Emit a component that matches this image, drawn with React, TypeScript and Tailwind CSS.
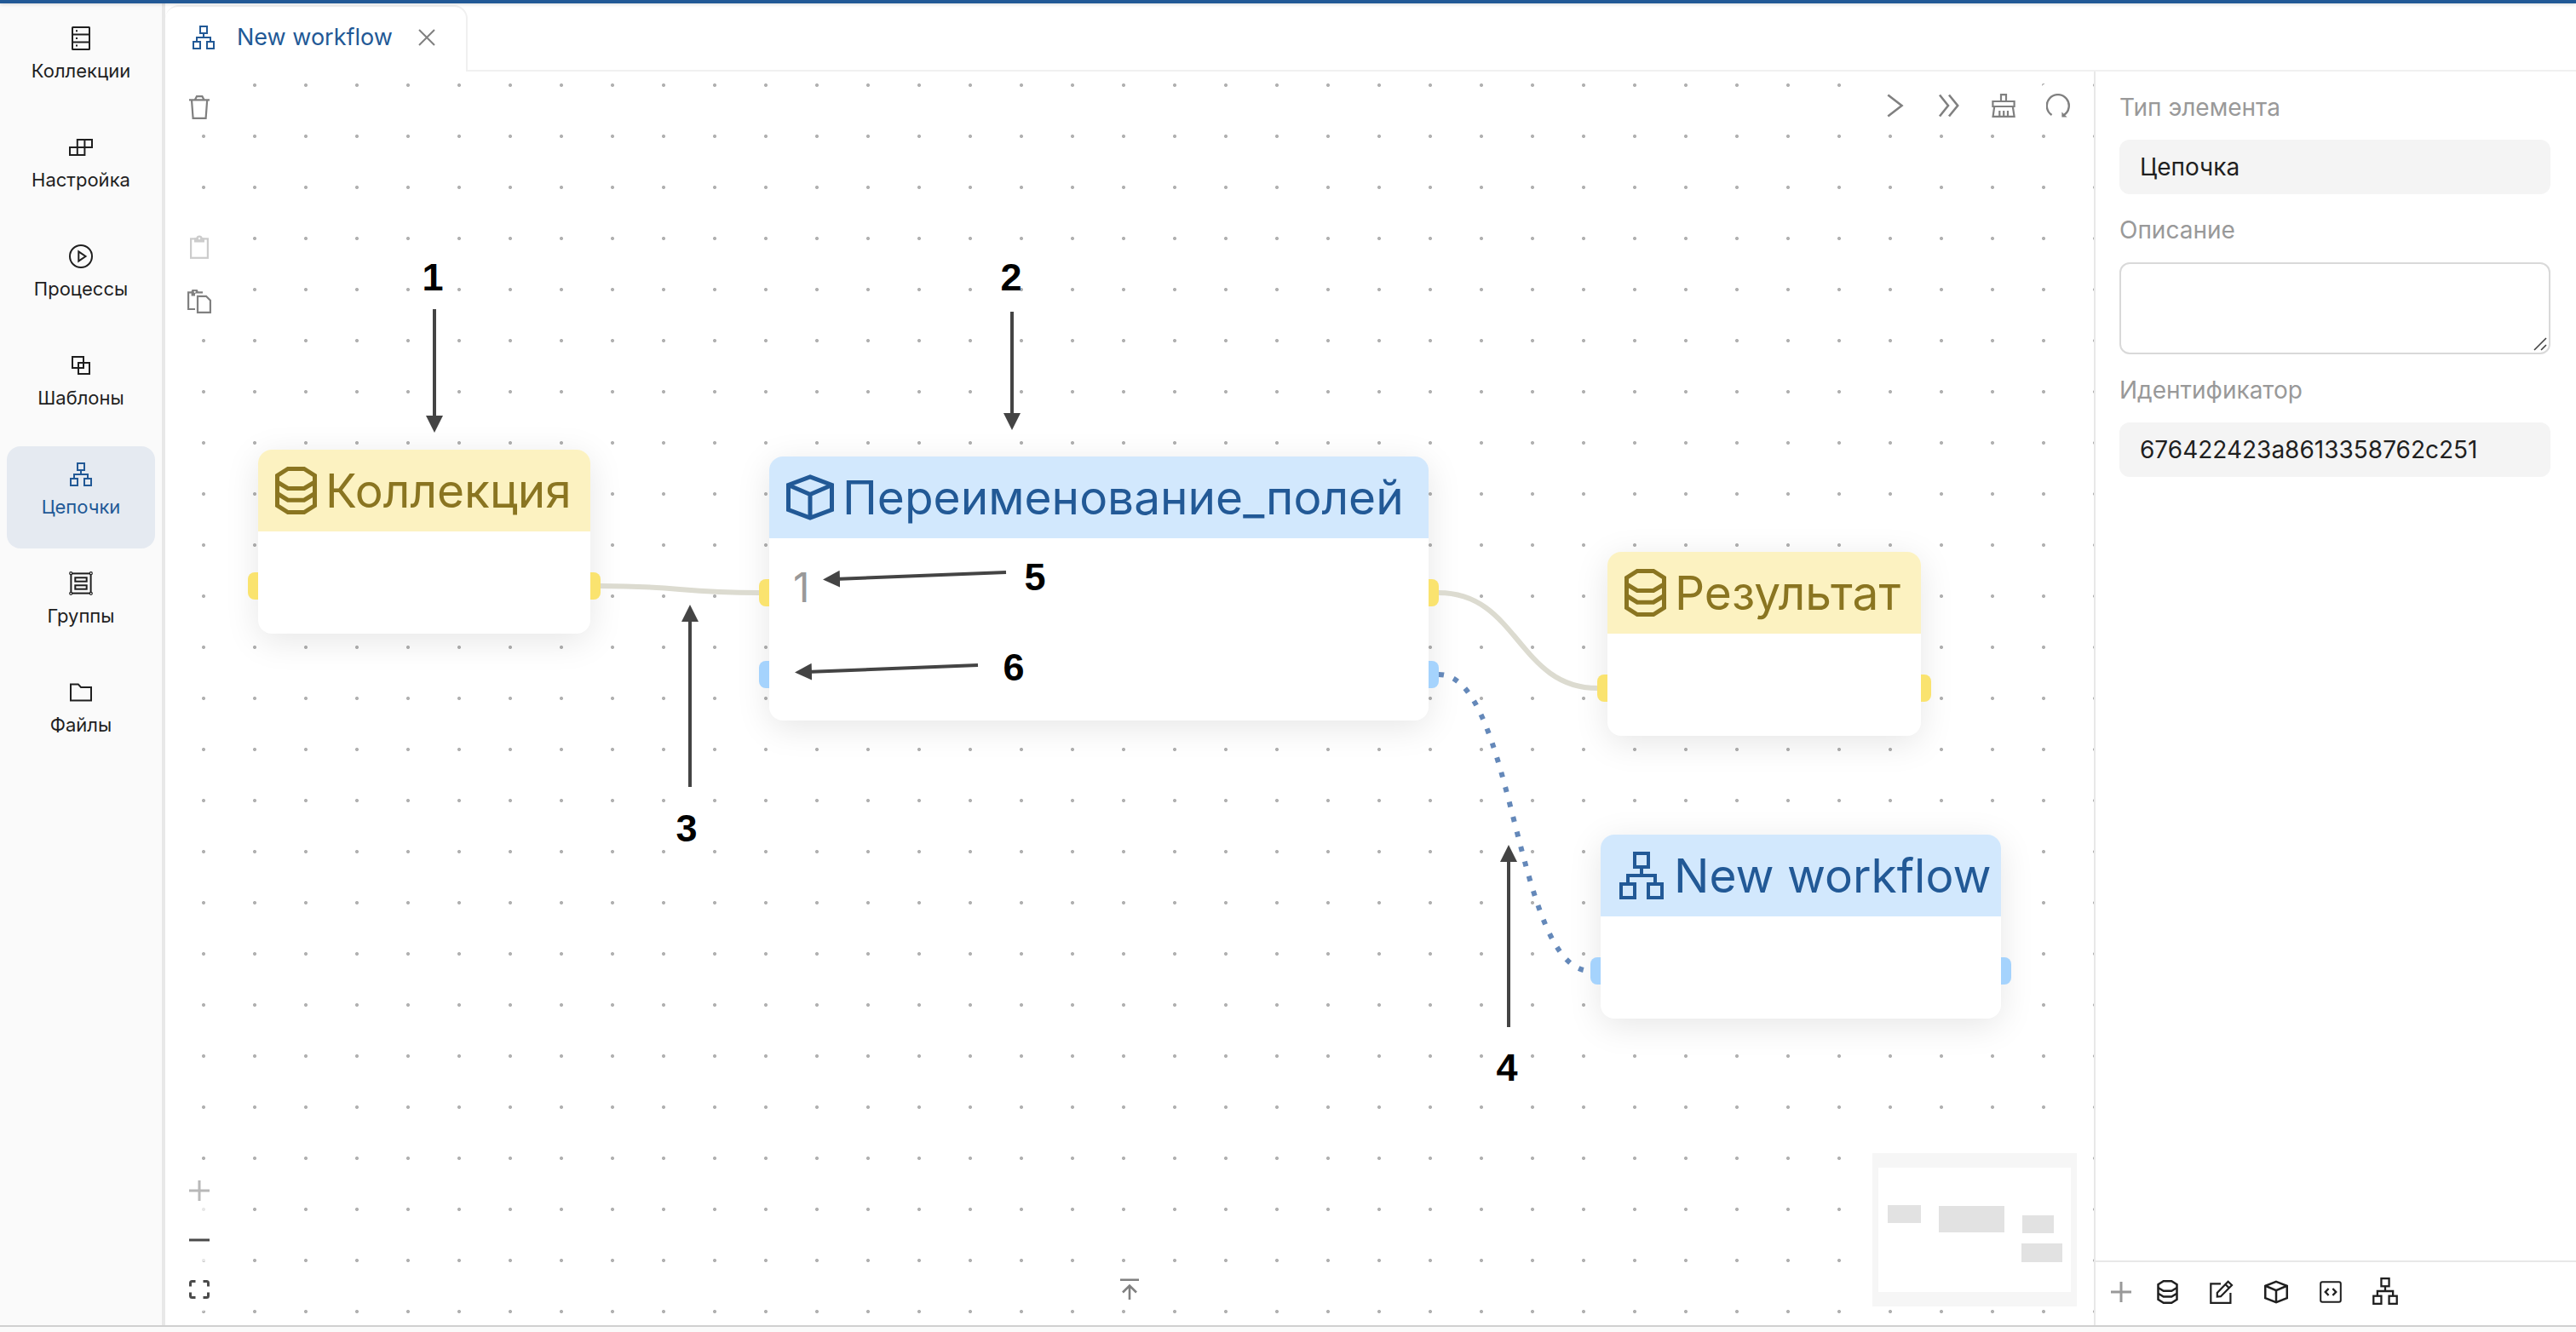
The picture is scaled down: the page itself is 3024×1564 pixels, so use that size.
import type { ReactNode } from "react";

type IconProps = { className?: string };

function NetworkIcon({ className }: IconProps) {
  return (
    <svg viewBox="0 0 26 28" className={className} fill="none" stroke="currentColor" strokeWidth="2" aria-hidden="true">
      <rect x="9" y="1" width="8" height="8" />
      <rect x="1" y="19" width="8" height="8" />
      <rect x="17" y="19" width="8" height="8" />
      <path d="M13 9v5M5 19v-5h16v5" />
    </svg>
  );
}

function DatabaseIcon({ className }: IconProps) {
  return (
    <svg viewBox="0 0 49 56" className={className} fill="none" stroke="currentColor" strokeWidth="5" aria-hidden="true">
      <path d="M15 2.5H34L46.5 10.3V45.7L34 53.5H15L2.5 45.7V10.3Z" />
      <path d="M2.5 18L15 25.5H34L46.5 18M2.5 31.5L15 39.2H34L46.5 31.5" />
    </svg>
  );
}

function CubeIcon({ className }: IconProps) {
  return (
    <svg viewBox="0 0 56 54" className={className} fill="none" stroke="currentColor" strokeWidth="5" aria-hidden="true">
      <path d="M28 2.8L53.5 12.5V41.5L28 51.2L2.5 41.5V12.5Z" />
      <path d="M2.5 12.5L28 23.5L53.5 12.5M28 23.5V51" />
    </svg>
  );
}

function CollectionsIcon() {
  return (
    <svg viewBox="0 0 22 28" className="h-7 w-[22px]" fill="none" stroke="currentColor" strokeWidth="2" aria-hidden="true">
      <rect x="1" y="1" width="20" height="26" rx="0.5" />
      <path d="M1 9.6h20M1 18.4h20" />
      <path d="M5 5.3h2M5 14h2M5 22.5h2" />
    </svg>
  );
}

function SettingsIcon() {
  return (
    <svg viewBox="0 0 28 20" className="h-5 w-7" fill="none" stroke="currentColor" strokeWidth="2" aria-hidden="true">
      <path d="M9.8 1H27V10H9.8ZM1 10H18.4V19H1ZM18.4 1V10M9.8 10V19" />
    </svg>
  );
}

function ProcessIcon() {
  return (
    <svg viewBox="0 0 28 28" className="size-7" fill="none" stroke="currentColor" strokeWidth="2" aria-hidden="true">
      <circle cx="14" cy="14" r="13" />
      <path d="M11.3 8.4L19.5 14L11.3 19.6Z" />
    </svg>
  );
}

function TemplatesIcon() {
  return (
    <svg viewBox="0 0 22 22" className="size-[22px]" fill="none" stroke="currentColor" strokeWidth="2" aria-hidden="true">
      <rect x="1" y="1" width="13" height="13" />
      <rect x="8" y="8" width="13" height="13" />
    </svg>
  );
}

function GroupsIcon() {
  return (
    <svg viewBox="0 0 28 28" className="size-7" fill="none" stroke="currentColor" strokeWidth="2" aria-hidden="true">
      <rect x="2.4" y="2.4" width="23.2" height="23.2" />
      <rect x="7.3" y="7.3" width="13.4" height="4.4" />
      <rect x="7.3" y="16.3" width="13.4" height="4.4" />
      <g fill="#fafafa" strokeWidth="1.2">
        <circle cx="2.2" cy="2.2" r="1.5" />
        <circle cx="25.8" cy="2.2" r="1.5" />
        <circle cx="2.2" cy="25.8" r="1.5" />
        <circle cx="25.8" cy="25.8" r="1.5" />
      </g>
    </svg>
  );
}

function FolderIcon() {
  return (
    <svg viewBox="0 0 26 22" className="h-[22px] w-[26px]" fill="none" stroke="currentColor" strokeWidth="2" aria-hidden="true">
      <path d="M1 1.4H9.8L13 5H25V20.6H1Z" />
    </svg>
  );
}

function TrashIcon() {
  return (
    <svg viewBox="0 0 24 28" className="h-7 w-6" fill="none" stroke="currentColor" strokeWidth="2.2" aria-hidden="true">
      <path d="M0 5.3H24M6.8 5.3L9 1.2H15.4L17.6 5.3M3 5.3L4.6 26.8H19.6L21.2 5.3" />
    </svg>
  );
}

function ClipboardIcon() {
  return (
    <svg viewBox="0 0 22 28" className="h-7 w-[22px]" fill="none" stroke="currentColor" strokeWidth="2.2" aria-hidden="true">
      <rect x="1.1" y="4.4" width="19.8" height="22.4" />
      <path d="M5 3.4H7.2A3.9 3.9 0 0 1 14.8 3.4H17V8.6H5Z" fill="currentColor" stroke="none" />
      <circle cx="11" cy="4" r="1.2" fill="#fff" stroke="none" />
    </svg>
  );
}

function PasteIcon() {
  return (
    <svg viewBox="0 0 28 28" className="size-7" fill="none" stroke="currentColor" strokeWidth="2.2" aria-hidden="true">
      <path d="M9 23H1.1V3.4H18" />
      <path d="M4.6 3A4 4 0 0 1 12.6 3L9 4.4V7.4H4.6Z" fill="currentColor" stroke="none" />
      <circle cx="8.7" cy="2.8" r="1.1" fill="#fff" stroke="none" />
      <path d="M12 7.8H22L26.9 12.6V26.8H12Z" />
    </svg>
  );
}

function ChevronIcon() {
  return (
    <svg viewBox="0 0 28 28" className="size-7" fill="none" stroke="currentColor" strokeWidth="2.6" aria-hidden="true">
      <path d="M6.3 1.5L22.5 14L6.3 26.5" />
    </svg>
  );
}

function DoubleChevronIcon() {
  return (
    <svg viewBox="0 0 28 28" className="size-7" fill="none" stroke="currentColor" strokeWidth="2.6" aria-hidden="true">
      <path d="M3 1.5L13 14L3 26.5M14 1.5L24.2 14L14 26.5" />
    </svg>
  );
}

function BrushIcon() {
  return (
    <svg viewBox="0 0 28 28" className="size-7" fill="none" stroke="currentColor" strokeWidth="2.2" aria-hidden="true">
      <path d="M11 9V1.1H17V9M1.4 9H26.6V15H1.4ZM3.2 15L1.6 26.9H26.6L24.8 15M9.3 20V27M14.2 20V27M19 20V27" />
    </svg>
  );
}

function ReloadIcon() {
  return (
    <svg viewBox="0 0 28 28" className="size-7" fill="none" stroke="currentColor" strokeWidth="2.4" aria-hidden="true">
      <path d="M6.6 25A13 13 0 1 1 20.6 25.2" />
      <path d="M18.4 21.5V27.6H24.6Z" fill="currentColor" stroke="none" />
    </svg>
  );
}

function EditIcon() {
  return (
    <svg viewBox="0 0 28 28" className="size-7" fill="none" stroke="currentColor" strokeWidth="2.2" aria-hidden="true">
      <path d="M13 4.4H1.3V26.8H24.4V15" />
      <path d="M8.8 19.6V15L21.6 1.8L26 6L13 19.2ZM18.4 5L22.8 9.4" />
    </svg>
  );
}

function CodeIcon() {
  return (
    <svg viewBox="0 0 26 26" className="size-[26px]" fill="none" stroke="currentColor" strokeWidth="2" aria-hidden="true">
      <rect x="1.2" y="1.2" width="23.6" height="23.6" rx="2" />
      <path d="M10.6 9L6.8 13L10.6 17M15.4 9L19.2 13L15.4 17" strokeWidth="2.4" />
    </svg>
  );
}

function PlusIcon({ className }: IconProps) {
  return (
    <svg viewBox="0 0 24 24" className={className} fill="none" stroke="currentColor" strokeWidth="3" aria-hidden="true">
      <path d="M12 0V24M0 12H24" />
    </svg>
  );
}

const menu: { label: string; icon: ReactNode; active?: boolean }[] = [
  { label: "Коллекции", icon: <CollectionsIcon /> },
  { label: "Настройка", icon: <SettingsIcon /> },
  { label: "Процессы", icon: <ProcessIcon /> },
  { label: "Шаблоны", icon: <TemplatesIcon /> },
  { label: "Цепочки", icon: <NetworkIcon className="h-7 w-[26px]" />, active: true },
  { label: "Группы", icon: <GroupsIcon /> },
  { label: "Файлы", icon: <FolderIcon /> },
];

function Sidebar() {
  return (
    <nav className="flex w-[194px] shrink-0 flex-col gap-2 border-r-4 border-[#e8e8e8] bg-[#fafafa] px-2 pt-2">
      {menu.map((item) => (
        <button
          key={item.label}
          type="button"
          className={
            item.active
              ? "flex h-[120px] flex-col items-center gap-2 rounded-2xl bg-[#e5eaf1] pt-[19px] text-[#225996]"
              : "flex h-[120px] flex-col items-center gap-2 rounded-2xl pt-[19px] text-[#1f1f1f]"
          }
        >
          <span className="flex h-7 items-center">{item.icon}</span>
          <span className="text-[22px] leading-8">{item.label}</span>
        </button>
      ))}
    </nav>
  );
}

function TabBar() {
  return (
    <div className="flex h-20 shrink-0 pt-0.5">
      <div className="flex w-[355px] shrink-0 items-center rounded-t-2xl border-t-2 border-r-2 border-[#f0f0f0] pb-1 pl-8 text-[#225996]">
        <NetworkIcon className="h-7 w-[26px]" />
        <a href="#workflow" className="ml-[26px] text-[27px] leading-10 whitespace-nowrap">
          New workflow
        </a>
        <button type="button" aria-label="Закрыть" className="ml-[30px] text-[#808080]">
          <svg viewBox="0 0 20 20" className="size-5" fill="none" stroke="currentColor" strokeWidth="2" aria-hidden="true">
            <path d="M1 1L19 19M19 1L1 19" />
          </svg>
        </button>
      </div>
      <div className="flex-1 border-b-2 border-[#f0f0f0]" />
    </div>
  );
}

type FlowNode = {
  id: string;
  title: string;
  kind: "data" | "action" | "flow";
  x: number;
  y: number;
  width: number;
  height: number;
  badge?: string;
};

// Positions are measured from the canvas' top left corner.
const nodes: FlowNode[] = [
  { id: "source", title: "Коллекция", kind: "data", x: 109, y: 444, width: 390, height: 216 },
  { id: "rename", title: "Переименование_полей", kind: "action", x: 709, y: 452, width: 774, height: 310, badge: "1" },
  { id: "result", title: "Результат", kind: "data", x: 1693, y: 564, width: 368, height: 216 },
  { id: "workflow", title: "New workflow", kind: "flow", x: 1685, y: 896, width: 470, height: 216 },
];

function Ports({ tone, low }: { tone: "yellow" | "blue"; low?: boolean }) {
  const color = tone === "yellow" ? "bg-[#fae36f]" : "bg-[#a5d3fd]";
  const top = low ? "top-60" : "top-36";
  return (
    <>
      <span className={`absolute -left-3 h-8 w-3 rounded-l-lg ${top} ${color}`} />
      <span className={`absolute -right-3 h-8 w-3 rounded-r-lg ${top} ${color}`} />
    </>
  );
}

function NodeCard({ node }: { node: FlowNode }) {
  const isData = node.kind === "data";
  return (
    <article
      className="absolute rounded-2xl bg-white shadow-[0_8px_40px_rgba(0,0,0,0.1)]"
      style={{ left: node.x, top: node.y, width: node.width, height: node.height }}
    >
      {node.kind === "flow" ? <Ports tone="blue" /> : <Ports tone="yellow" />}
      {node.kind === "action" && <Ports tone="blue" low />}
      <header
        className={
          isData
            ? "flex h-24 items-center gap-2.5 rounded-t-2xl bg-[#fcf2c1] pl-5 text-[#8a7521]"
            : "flex h-24 items-center gap-2.5 rounded-t-2xl bg-[#d2e8fd] pl-5 text-[#225996]"
        }
      >
        {node.kind === "data" && <DatabaseIcon className="h-14 w-[49px] shrink-0" />}
        {node.kind === "action" && <CubeIcon className="h-[54px] w-14 shrink-0" />}
        {node.kind === "flow" && <NetworkIcon className="h-14 w-14 shrink-0" />}
        <h2 className="text-[55px] leading-[80px] whitespace-nowrap">{node.title}</h2>
      </header>
      {node.badge && <p className="px-7 pt-[34px] text-5xl leading-[48px] text-[#999999]">{node.badge}</p>}
    </article>
  );
}

const callouts = [
  { n: 1, x: 314, y: 242 },
  { n: 2, x: 993, y: 242 },
  { n: 3, x: 612, y: 889 },
  { n: 4, x: 1575, y: 1170 },
  { n: 5, x: 1021, y: 594 },
  { n: 6, x: 996, y: 700 },
];

const arrows = [
  "M316 279V410",
  "M994 282V407",
  "M616 840V640",
  "M1577 1122V922",
  "M987 588L786 596",
  "M954 697L753 705",
];

function Edges() {
  return (
    <svg className="absolute inset-0 size-full" fill="none" aria-hidden="true">
      <g strokeWidth="6">
        <path d="M511 604C604 604 604 612 697 612" stroke="#dcdbd0" />
        <path d="M1495 612C1588 612 1588 724 1681 724" stroke="#dcdbd0" />
        <path d="M1495 708C1584 708 1584 1056 1673 1056" stroke="#6488b9" strokeDasharray="6 12" />
      </g>
    </svg>
  );
}

function Callouts() {
  return (
    <div className="pointer-events-none absolute inset-0">
      <svg className="absolute inset-0 size-full" fill="none" aria-hidden="true">
        <defs>
          <marker id="tip" markerUnits="userSpaceOnUse" markerWidth="20" markerHeight="20" refX="6" refY="10" orient="auto">
            <path d="M0 0L20 10L0 20Z" fill="#444444" />
          </marker>
        </defs>
        {arrows.map((d) => (
          <path key={d} d={d} stroke="#444444" strokeWidth="4" markerEnd="url(#tip)" />
        ))}
      </svg>
      {callouts.map((c) => (
        <span
          key={c.n}
          className="absolute flex size-12 -translate-1/2 items-center justify-center font-['Liberation_Sans',Arial,sans-serif] text-[45px] leading-[48px] font-bold text-black"
          style={{ left: c.x, top: c.y }}
        >
          {c.n}
        </span>
      ))}
    </div>
  );
}

function ToolButton({ label, disabled, children }: { label: string; disabled?: boolean; children: ReactNode }) {
  return (
    <button
      type="button"
      aria-label={label}
      disabled={disabled}
      className="flex size-15 items-center justify-center rounded-full bg-white text-[#808080] disabled:text-[#cccccc]"
    >
      {children}
    </button>
  );
}

function ZoomButton({ label, disabled, children }: { label: string; disabled?: boolean; children: ReactNode }) {
  return (
    <button
      type="button"
      aria-label={label}
      disabled={disabled}
      className="flex size-13 items-center justify-center rounded-full bg-white/70 text-[#4a4a4a] disabled:text-[#b8b8b8]"
    >
      {children}
    </button>
  );
}

function Minimap() {
  return (
    <svg viewBox="0 0 240 180" className="absolute right-5 bottom-[22px] h-[180px] w-60" role="img" aria-label="Мини-карта">
      <rect width="240" height="180" fill="#f6f6f6" />
      <rect x="7" y="17" width="226" height="146" fill="#ffffff" />
      <g fill="#e2e2e2">
        <rect x="18" y="61" width="39" height="21" />
        <rect x="78" y="62" width="77" height="31" />
        <rect x="176" y="73" width="37" height="21" />
        <rect x="175" y="106" width="48" height="22" />
      </g>
    </svg>
  );
}

function Canvas() {
  return (
    <main className="relative min-w-0 flex-1 overflow-hidden bg-white bg-[radial-gradient(circle,#b1b1b1_1.6px,transparent_2.4px)] bg-[size:60px_60px] bg-[position:15px_-14px]">
      {nodes.map((node) => (
        <NodeCard key={node.id} node={node} />
      ))}
      <Edges />
      <Callouts />

      <div className="absolute top-3 left-2.5 flex flex-col">
        <ToolButton label="Удалить">
          <TrashIcon />
        </ToolButton>
        <div className="mt-26 flex flex-col gap-1">
          <ToolButton label="Вставить" disabled>
            <ClipboardIcon />
          </ToolButton>
          <ToolButton label="Копировать">
            <PasteIcon />
          </ToolButton>
        </div>
      </div>

      <div className="absolute top-2.5 right-3 flex gap-1">
        <ToolButton label="Шаг">
          <ChevronIcon />
        </ToolButton>
        <ToolButton label="Запустить всё">
          <DoubleChevronIcon />
        </ToolButton>
        <ToolButton label="Очистить">
          <BrushIcon />
        </ToolButton>
        <ToolButton label="Обновить">
          <ReloadIcon />
        </ToolButton>
      </div>

      <div className="absolute bottom-4 left-3.5 flex flex-col gap-1.5">
        <ZoomButton label="Увеличить" disabled>
          <PlusIcon className="size-6" />
        </ZoomButton>
        <ZoomButton label="Уменьшить">
          <svg viewBox="0 0 24 24" className="size-6" stroke="currentColor" strokeWidth="3" aria-hidden="true">
            <path d="M0 12H24" />
          </svg>
        </ZoomButton>
        <ZoomButton label="Показать всё">
          <svg viewBox="0 0 24 22" className="h-[22px] w-6" fill="none" stroke="currentColor" strokeWidth="3" aria-hidden="true">
            <path d="M1.5 7.5V3.5Q1.5 1.5 3.5 1.5H7.5M16.5 1.5H20.5Q22.5 1.5 22.5 3.5V7.5M22.5 14.5V18.5Q22.5 20.5 20.5 20.5H16.5M7.5 20.5H3.5Q1.5 20.5 1.5 18.5V14.5" />
          </svg>
        </ZoomButton>
      </div>

      <div className="absolute inset-x-0 bottom-[29px] flex justify-center">
        <button type="button" aria-label="Развернуть панель" className="text-[#808080]">
          <svg viewBox="0 0 22 26" className="h-[26px] w-[22px]" fill="none" stroke="currentColor" strokeWidth="2.6" aria-hidden="true">
            <path d="M0 1.7H22M11 25V8.5M3 16.5L11 8.5L19 16.5" />
          </svg>
        </button>
      </div>

      <Minimap />
    </main>
  );
}

function Inspector() {
  return (
    <aside className="flex w-[566px] shrink-0 flex-col border-l-2 border-[#e8e8e8] bg-white text-[28px]">
      <form className="flex flex-1 flex-col pt-5 pr-[30px] pl-7">
        <label htmlFor="type" className="mb-4 leading-[44px] text-[#999999]">
          Тип элемента
        </label>
        <input id="type" readOnly value="Цепочка" className="h-16 rounded-xl bg-[#f4f4f4] px-6 text-[#1f1f1f] outline-none" />
        <label htmlFor="description" className="mt-5 mb-4 leading-[44px] text-[#999999]">
          Описание
        </label>
        <div className="relative flex">
          <textarea
            id="description"
            className="h-[108px] w-full resize-none rounded-xl border-2 border-[#d9d9d9] bg-white px-6 py-2 text-[#1f1f1f] outline-none"
          />
          <svg
            viewBox="0 0 16 16"
            className="pointer-events-none absolute right-1 bottom-1 size-4"
            fill="none"
            stroke="#444444"
            strokeWidth="1.6"
            aria-hidden="true"
          >
            <path d="M1 15L15 1M9 15L15 9" />
          </svg>
        </div>
        <label htmlFor="identifier" className="mt-5 mb-4 leading-[44px] text-[#999999]">
          Идентификатор
        </label>
        <input
          id="identifier"
          readOnly
          value="676422423a8613358762c251"
          className="h-16 rounded-xl bg-[#f4f4f4] px-6 text-[#1f1f1f] outline-none"
        />
      </form>
      <div className="flex h-[76px] shrink-0 items-center border-t-2 border-[#e8e8e8] pb-1 pl-2 text-[#1f1f1f]">
        <button type="button" aria-label="Добавить" className="flex w-11 justify-center text-[#999999]">
          <PlusIcon className="size-6" />
        </button>
        <button type="button" aria-label="Коллекция" className="flex w-16 justify-center">
          <DatabaseIcon className="h-7 w-[25px]" />
        </button>
        <button type="button" aria-label="Редактировать" className="flex w-16 justify-center">
          <EditIcon />
        </button>
        <button type="button" aria-label="Процесс" className="flex w-16 justify-center">
          <CubeIcon className="h-7 w-7" />
        </button>
        <button type="button" aria-label="Код" className="flex w-16 justify-center">
          <CodeIcon />
        </button>
        <button type="button" aria-label="Цепочка" className="flex w-16 justify-center pb-0.5">
          <NetworkIcon className="h-8 w-[30px]" />
        </button>
      </div>
    </aside>
  );
}

export default function App() {
  return (
    <div className="flex h-screen flex-col bg-white font-[Inter,'Noto_Sans',sans-serif] text-[#1f1f1f]">
      <div className="relative z-10 h-1 shrink-0 bg-[#225996] shadow-[0_1px_4px_rgba(0,0,0,0.15)]" />
      <div className="flex min-h-0 flex-1">
        <Sidebar />
        <div className="flex min-w-0 flex-1 flex-col">
          <TabBar />
          <div className="flex min-h-0 flex-1">
            <Canvas />
            <Inspector />
          </div>
        </div>
      </div>
      <div className="h-2 shrink-0 border-t-2 border-[#d0d0d0] bg-[#fafafa]" />
    </div>
  );
}
